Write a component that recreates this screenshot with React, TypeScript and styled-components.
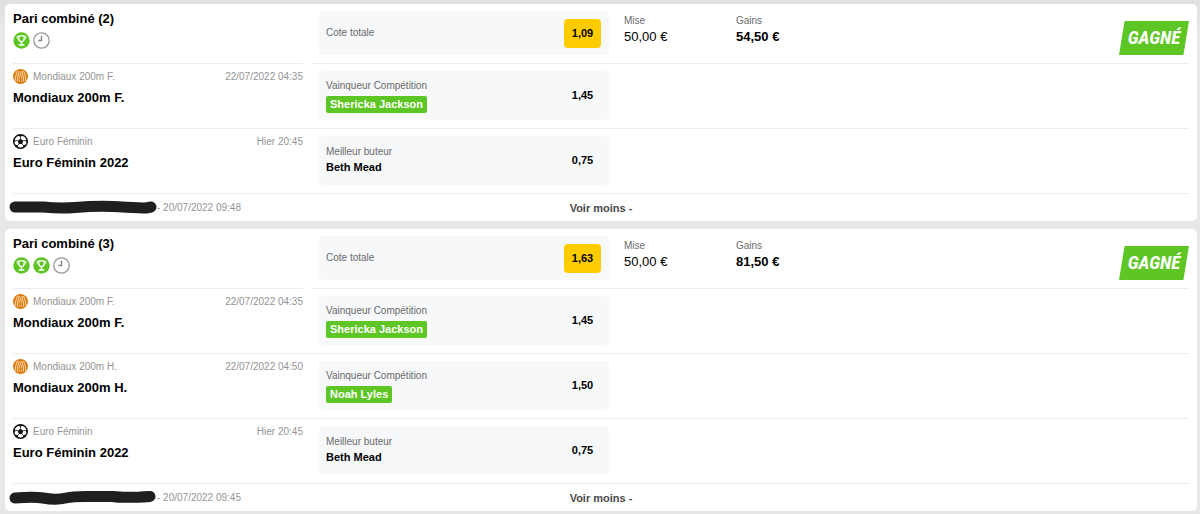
import React from "react";
import styled, { createGlobalStyle } from "styled-components";

const GlobalStyle = createGlobalStyle`
  *, *::before, *::after { box-sizing: border-box; }
  body {
    margin: 0;
    background: linear-gradient(#dfe0e2, #e6e7e9 30px);
    background-color: #e6e7e9;
    font-family: "Liberation Sans", Arial, sans-serif;
    color: #000;
  }
`;

const Page = styled.main`
  display: flex;
  flex-direction: column;
  gap: 8px;
  padding: 4px 3px 3px 5px;
`;

const Card = styled.article`
  padding: 0 8px;
  border-radius: 5px;
  background: #fff;
`;

const Header = styled.header`
  display: grid;
  grid-template-columns: 290px 1fr;
  column-gap: 8px;
  height: 60px;
`;

const HeaderCell = styled.div`
  border-bottom: 1px solid #ececee;
`;

const HeaderSummary = styled(HeaderCell)`
  display: flex;
  align-items: flex-start;
  padding: 7px 0 0 8px;
`;

const CardTitle = styled.h2`
  margin: 0;
  padding-top: 7px;
  font-size: 13px;
  line-height: 16px;
  font-weight: 700;
`;

const StatusList = styled.div`
  display: flex;
  gap: 3px;
  margin-top: 5px;
`;

const Icon = styled.svg<{ $size: number }>`
  display: block;
  flex: none;
  width: ${(p) => p.$size}px;
  height: ${(p) => p.$size}px;
`;

const Panel = styled.div<{ $height: number }>`
  display: flex;
  align-items: center;
  justify-content: space-between;
  flex: none;
  width: 290px;
  height: ${(p) => p.$height}px;
  padding: 0 8px 0 7px;
  border-radius: 4px;
  background: #f6f8fa;
`;

const PanelLabel = styled.div`
  font-size: 10px;
  line-height: 14px;
  color: #6a6a6a;
`;

const Odds = styled.div<{ $total?: boolean }>`
  width: 37px;
  border-radius: 4px;
  background: ${(p) => (p.$total ? "#ffcc00" : "transparent")};
  font-size: 11px;
  line-height: 29px;
  font-weight: 700;
  text-align: center;
`;

const Amounts = styled.dl`
  display: flex;
  flex: 1;
  margin: 0;
  padding: 2px 0 0 15px;
`;

const Amount = styled.div`
  width: 112px;
`;

const AmountLabel = styled.dt`
  font-size: 10px;
  line-height: 16px;
  color: #6a6a6a;
`;

const AmountValue = styled.dd<{ $bold?: boolean }>`
  margin: 0;
  font-size: 13px;
  line-height: 16px;
  font-weight: ${(p) => (p.$bold ? 700 : 400)};
`;

const WonBadge = styled.div`
  width: 70px;
  margin-top: 10px;
  background: #5ec624;
  clip-path: polygon(8% 0, 100% 0, 92% 100%, 0 100%);
  color: #fff;
  font-family: "Roboto Condensed", Roboto, "Liberation Sans", sans-serif;
  font-size: 19px;
  line-height: 34px;
  font-weight: 700;
  font-style: italic;
  text-align: center;
`;

const Leg = styled.section`
  display: grid;
  grid-template-columns: 290px 1fr;
  column-gap: 16px;
  height: 65px;
  padding-top: 7px;
  border-bottom: 1px solid #ececee;
`;

const EventLine = styled.div`
  display: flex;
  align-items: center;
  gap: 5px;
  margin-top: -2px;
  font-size: 10px;
  line-height: 15px;
  color: #949494;
`;

const EventDate = styled.time`
  margin-left: auto;
`;

const EventTitle = styled.h3`
  margin: 6px 0 0;
  font-size: 13px;
  line-height: 16px;
  font-weight: 700;
`;

const Pick = styled.div`
  font-size: 11px;
  line-height: 17px;
  font-weight: 700;
`;

const WonPick = styled(Pick)`
  width: fit-content;
  margin-top: 3px;
  padding: 0 4px;
  border-radius: 2px;
  background: #5ec624;
  color: #fff;
`;

const Footer = styled.footer`
  display: grid;
  grid-template-columns: 1fr auto 1fr;
  align-items: center;
  height: 27px;
`;

const Reference = styled.div`
  display: flex;
  align-items: center;
  margin-left: -4px;
  font-size: 10px;
  line-height: 14px;
  color: #949494;
`;

const Scribble = styled.svg`
  display: block;
  flex: none;
  width: 148px;
  height: 18px;
`;

const Toggle = styled.button`
  padding: 0;
  border: 0;
  background: none;
  color: #4a4a4a;
  font: 700 11px/16px "Liberation Sans", Arial, sans-serif;
  cursor: pointer;
`;

const TrophyIcon = () => (
  <Icon $size={17} viewBox="0 0 17 17" aria-label="Gagné">
    <circle cx="8.5" cy="8.5" r="8.2" fill="#5ec624" />
    <g fill="none" stroke="#fff" strokeWidth="1.2" strokeLinecap="round" strokeLinejoin="round">
      <path d="M5.9 3.8h5.2v2.7c0 1.900-1.1 3.200-2.6 3.200s-2.6-1.300-2.6-3.200z" />
      <path d="M5.8 4.500H4c0 1.900.8 3.200 2.200 3.500M11.2 4.500H13c0 1.900-.8 3.200-2.200 3.500" strokeWidth="1" />
      <path d="M8.5 9.700v2.500M6.200 13h4.600" strokeWidth="1.5" />
    </g>
  </Icon>
);

const ClockIcon = () => (
  <Icon $size={17} viewBox="0 0 17 17" aria-label="En attente">
    <circle cx="8.5" cy="8.5" r="7.7" fill="#fff" stroke="#999" strokeWidth="1.3" />
    <path d="M8.5 3.800v4.700H5.200" fill="none" stroke="#888" strokeWidth="1.4" />
  </Icon>
);

const AthleticsIcon = () => (
  <Icon $size={15} viewBox="0 0 15 15" aria-hidden="true">
    <circle cx="7.5" cy="7.5" r="7.5" fill="#dd7b0c" />
    <g fill="none" stroke="#fff0dc" strokeWidth=".8">
      <path d="M4.600 2C3 5 2.300 8 2.300 12M10.400 2c1.600 3 2.300 6 2.300 10" />
      <path d="M6.300 2C5 5.500 4.500 8.500 4.400 12.500M8.700 2c1.300 3.500 1.800 6.500 1.900 10.500" />
      <path d="M7.500 3.500 6.200 9.500M7.500 3.500l1.300 6M6.500 10.500V13M8.500 10.500V13" strokeWidth=".6" />
    </g>
  </Icon>
);

const FootballIcon = () => (
  <Icon $size={15} viewBox="0 0 15 15" aria-hidden="true">
    <circle cx="7.5" cy="7.5" r="6.800" fill="#fff" stroke="#111" strokeWidth="1.400" />
    <g fill="#111">
      <path d="m7.500 4.700 2.800 2-1.100 3.300H5.800L4.700 6.700z" />
      <path d="M4.900.9h5.200L7.500 2.900zM14.200 5.200l.1 4-2.100-2.500zM.8 5.200l-.1 4 2.100-2.500zM9.700 14l3.300-2.500-.3-1.100-2.500.8zM5.300 14 2 11.500l.3-1.100 2.500.8z" />
    </g>
    <path d="M7.500 4.700V2.500M10.300 6.700l2.200-.5M9.200 10l1.300 1.700M5.800 10l-1.300 1.700M4.700 6.700l-2.200-.5" stroke="#111" strokeWidth=".8" />
  </Icon>
);

type LegData = {
  sport: "athletics" | "football";
  event: string;
  title: string;
  date: string;
  market: string;
  pick: string;
  won?: boolean;
  odds: string;
};

type Bet = {
  title: string;
  wins: number;
  total: string;
  gains: string;
  placed: string;
  stroke: string;
  legs: LegData[];
};

const sprintWomen: LegData = {
  sport: "athletics",
  event: "Mondiaux 200m F.",
  title: "Mondiaux 200m F.",
  date: "22/07/2022 04:35",
  market: "Vainqueur Compétition",
  pick: "Shericka Jackson",
  won: true,
  odds: "1,45",
};

const sprintMen: LegData = {
  ...sprintWomen,
  event: "Mondiaux 200m H.",
  title: "Mondiaux 200m H.",
  date: "22/07/2022 04:50",
  pick: "Noah Lyles",
  odds: "1,50",
};

const euro: LegData = {
  sport: "football",
  event: "Euro Féminin",
  title: "Euro Féminin 2022",
  date: "Hier 20:45",
  market: "Meilleur buteur",
  pick: "Beth Mead",
  odds: "0,75",
};

const bets: Bet[] = [
  {
    title: "Pari combiné (2)",
    wins: 1,
    total: "1,09",
    gains: "54,50 €",
    placed: "20/07/2022 09:48",
    stroke: "M6 8H34C44 9 54 9.500 66 8.500S92 7 104 7.500S128 9 137 9L142 8",
    legs: [sprintWomen, euro],
  },
  {
    title: "Pari combiné (3)",
    wins: 2,
    total: "1,63",
    gains: "81,50 €",
    placed: "20/07/2022 09:45",
    stroke: "M6 9C18 8 26 7.500 34 9S48 11 57 9S72 7.500 84 7.500H104C114 9 126 8.500 141 7.500",
    legs: [sprintWomen, sprintMen, euro],
  },
];

function LegRow({ leg }: { leg: LegData }) {
  return (
    <Leg>
      <div>
        <EventLine>
          {leg.sport === "athletics" ? <AthleticsIcon /> : <FootballIcon />}
          <span>{leg.event}</span>
          <EventDate>{leg.date}</EventDate>
        </EventLine>
        <EventTitle>{leg.title}</EventTitle>
      </div>
      <Panel $height={49}>
        <div>
          <PanelLabel>{leg.market}</PanelLabel>
          {leg.won ? <WonPick>{leg.pick}</WonPick> : <Pick>{leg.pick}</Pick>}
        </div>
        <Odds>{leg.odds}</Odds>
      </Panel>
    </Leg>
  );
}

function BetCard({ bet }: { bet: Bet }) {
  return (
    <Card>
      <Header>
        <HeaderCell>
          <CardTitle>{bet.title}</CardTitle>
          <StatusList>
            {Array.from({ length: bet.wins }, (_, i) => (
              <TrophyIcon key={i} />
            ))}
            <ClockIcon />
          </StatusList>
        </HeaderCell>
        <HeaderSummary>
          <Panel $height={44}>
            <PanelLabel>Cote totale</PanelLabel>
            <Odds $total>{bet.total}</Odds>
          </Panel>
          <Amounts>
            <Amount>
              <AmountLabel>Mise</AmountLabel>
              <AmountValue>50,00 €</AmountValue>
            </Amount>
            <Amount>
              <AmountLabel>Gains</AmountLabel>
              <AmountValue $bold>{bet.gains}</AmountValue>
            </Amount>
          </Amounts>
          <WonBadge>GAGNÉ</WonBadge>
        </HeaderSummary>
      </Header>
      {bet.legs.map((leg) => (
        <LegRow key={leg.title} leg={leg} />
      ))}
      <Footer>
        <Reference>
          <Scribble viewBox="0 0 148 18" aria-hidden="true">
            <path d={bet.stroke} fill="none" stroke="#1f1f1f" strokeWidth="11" strokeLinecap="round" strokeLinejoin="round" />
          </Scribble>
          <span>- {bet.placed}</span>
        </Reference>
        <Toggle type="button">Voir moins -</Toggle>
      </Footer>
    </Card>
  );
}

export default function App() {
  return (
    <>
      <GlobalStyle />
      <Page>
        {bets.map((bet) => (
          <BetCard key={bet.title} bet={bet} />
        ))}
      </Page>
    </>
  );
}
